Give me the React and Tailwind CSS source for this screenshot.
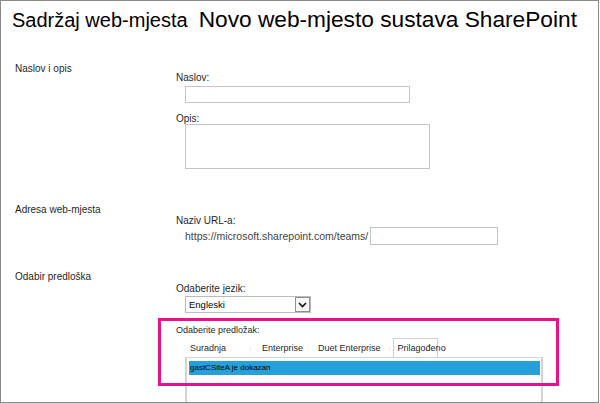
import React from 'react';

const Section = ({ label, children, className = '' }) => (
  <div className={`flex ${className}`}>
    <div className="w-[161px] ml-[14px] shrink-0 text-[10px] leading-[12px] text-[#1f1f1f]">{label}</div>
    <div className="flex flex-col">{children}</div>
  </div>
);

const Label = ({ children, className = '' }) => (
  <div className={`text-[10px] leading-[12px] text-[#1f1f1f] ${className}`}>{children}</div>
);

const tabs = [
  { name: 'Suradnja', cls: 'ml-[5px]' },
  { name: 'Enterprise', cls: 'ml-[36px]' },
  { name: 'Duet Enterprise', cls: 'ml-[15px]' },
];

const App = () => {
  return (
    <div
      className="relative w-[599px] h-[403px] border border-[#8a8a8a] bg-white overflow-hidden text-black"
      style={{ fontFamily: '"Liberation Sans", Arial, sans-serif' }}
    >
      {/* header */}
      <div className="flex items-baseline h-[30px] pl-[11px] pt-[7px]">
        <h1 className="text-[20px] leading-none font-normal">Sadržaj web-mjesta</h1>
        <h2 className="text-[22.7px] leading-none font-normal ml-[11px]">Novo web-mjesto sustava SharePoint</h2>
      </div>

      <Section label="Naslov i opis" className="mt-[32px]">
        <Label className="pt-[9px]">Naslov:</Label>
        <div className="mt-[2px] ml-[9px] w-[225px] h-[17px] border border-[#c4c4c4]" />
        <Label className="mt-[10px]">Opis:</Label>
        <div className="-mt-px ml-[9px] w-[245px] h-[45px] border border-[#c4c4c4]" />
      </Section>

      <Section label="Adresa web-mjesta" className="mt-[35px]">
        <Label className="pt-[11px]">Naziv URL-a:</Label>
        <div className="flex items-center ml-[9px] h-[18px]">
          <span className="text-[10.5px] leading-[12px] text-[#444]">https://microsoft.sharepoint.com/teams/</span>
          <div className="ml-[2px] w-[128px] h-[18px] border border-[#c4c4c4]" />
        </div>
      </Section>

      <Section label="Odabir predloška" className="mt-[26px]">
        <Label className="pt-[12px]">Odaberite jezik:</Label>
        <div className="mt-px ml-[9px] flex w-[126px] h-[17px] border border-[#bcbcbc]">
          <span className="flex-1 pl-[3px] text-[9.5px] leading-[15px] text-black">Engleski</span>
          <div className="w-[15px] h-full border border-[#8f8f8f] bg-[#f6f6f6] flex items-center justify-center">
            <svg width="9" height="6" viewBox="0 0 9 6">
              <path d="M1 1 L4.5 4.5 L8 1" fill="none" stroke="#111" strokeWidth="1.6" />
            </svg>
          </div>
        </div>

        <div className="mt-[12px] text-[9px] leading-[11px] text-[#1f1f1f]">Odaberite predložak:</div>

        <div className="mt-[2px] ml-[9px] flex items-end h-[19px] text-[9px] leading-[11px] text-[#1f1f1f]">
          {tabs.map((t) => (
            <div key={t.name} className={`${t.cls} pb-[3px] whitespace-nowrap`}>{t.name}</div>
          ))}
          <div className="ml-[12px] w-[45px] h-[19px] border-t border-l border-r border-[#cfcfcf] bg-white pl-[4px] pt-[4px] whitespace-nowrap">
            Prilagođeno
          </div>
        </div>

        <div className="ml-[9px] w-[358px] h-[60px] border-t border-l-2 border-r-2 border-[#d3d3d3] pl-[2px] pt-[3px]">
          <div className="w-[351px] h-[14px] bg-[#26a0da] pl-[1px] text-[8px] leading-[14px] text-black">
            gastCSiteA je dokazan
          </div>
        </div>
      </Section>

      {/* tab separators */}
      <div className="absolute left-[249px] top-[346px] w-px h-[4px] bg-[#ececec]" />
      <div className="absolute left-[388px] top-[346px] w-px h-[4px] bg-[#ececec]" />

      {/* highlight annotation */}
      <div className="absolute left-[157px] top-[317px] w-[401px] h-[68px] border-[3px] border-[#e8118d] pointer-events-none" />
    </div>
  );
};

export default App;
